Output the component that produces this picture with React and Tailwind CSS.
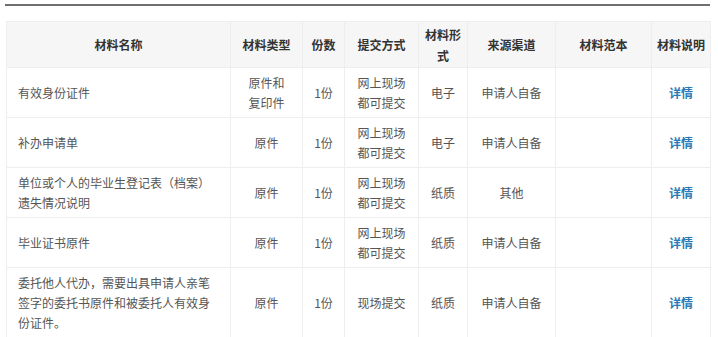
import React from 'react';

const rows = [
  { name: ['有效身份证件'], type: ['原件和', '复印件'], count: '1份', submit: ['网上现场', '都可提交'], form: '电子', source: '申请人自备' },
  { name: ['补办申请单'], type: ['原件'], count: '1份', submit: ['网上现场', '都可提交'], form: '电子', source: '申请人自备' },
  { name: ['单位或个人的毕业生登记表（档案）', '遗失情况说明'], type: ['原件'], count: '1份', submit: ['网上现场', '都可提交'], form: '纸质', source: '其他' },
  { name: ['毕业证书原件'], type: ['原件'], count: '1份', submit: ['网上现场', '都可提交'], form: '纸质', source: '申请人自备' },
  { name: ['委托他人代办，需要出具申请人亲笔', '签字的委托书原件和被委托人有效身', '份证件。'], type: ['原件'], count: '1份', submit: ['现场提交'], form: '纸质', source: '申请人自备' },
];

function Lines({ items }) {
  return items.map((t, i) => (
    <div key={i}>{t}</div>
  ));
}

export default function App() {
  const th = 'border border-[#eeeeee] font-bold text-[#333333] text-center align-middle px-[4px] py-0';
  const td = 'border border-[#eeeeee] text-[#555555] text-center align-middle pt-[5px] pb-[4px] px-[4px]';

  return (
    <div
      className="w-[718px] h-[337px] overflow-hidden bg-white pt-[4px] text-[12px]"
      style={{ fontFamily: '"Noto Sans CJK SC", "Microsoft YaHei", sans-serif' }}
    >
      <div className="ml-[5px] w-[705px] h-[2px] bg-[#6f6f6f]" />
      <table className="ml-[6px] mt-[15px] w-[704px] table-fixed border-collapse">
        <colgroup>
          <col className="w-[224px]" />
          <col className="w-[72px]" />
          <col className="w-[42px]" />
          <col className="w-[74px]" />
          <col className="w-[49px]" />
          <col className="w-[88px]" />
          <col className="w-[96px]" />
          <col className="w-[59px]" />
        </colgroup>
        <thead>
          <tr className="h-[46px] bg-[#f6f6f6] leading-[21px]">
            <th className={th}>材料名称</th>
            <th className={th}>材料类型</th>
            <th className={th}>份数</th>
            <th className={th}>提交方式</th>
            <th className={th}><div>材料形</div><div>式</div></th>
            <th className={th}>来源渠道</th>
            <th className={th}>材料范本</th>
            <th className={th}>材料说明</th>
          </tr>
        </thead>
        <tbody className="leading-[20px]">
          {rows.map((r, i) => (
            <tr key={i} className="h-[50px]">
              <td className={td + ' !text-left !px-[11px]'}><Lines items={r.name} /></td>
              <td className={td}><Lines items={r.type} /></td>
              <td className={td}>{r.count}</td>
              <td className={td}><Lines items={r.submit} /></td>
              <td className={td}>{r.form}</td>
              <td className={td}>{r.source}</td>
              <td className={td}></td>
              <td className={td}>
                <a className="font-bold text-[#2a7ab8] cursor-pointer">详情</a>
              </td>
            </tr>
          ))}
        </tbody>
      </table>
    </div>
  );
}
